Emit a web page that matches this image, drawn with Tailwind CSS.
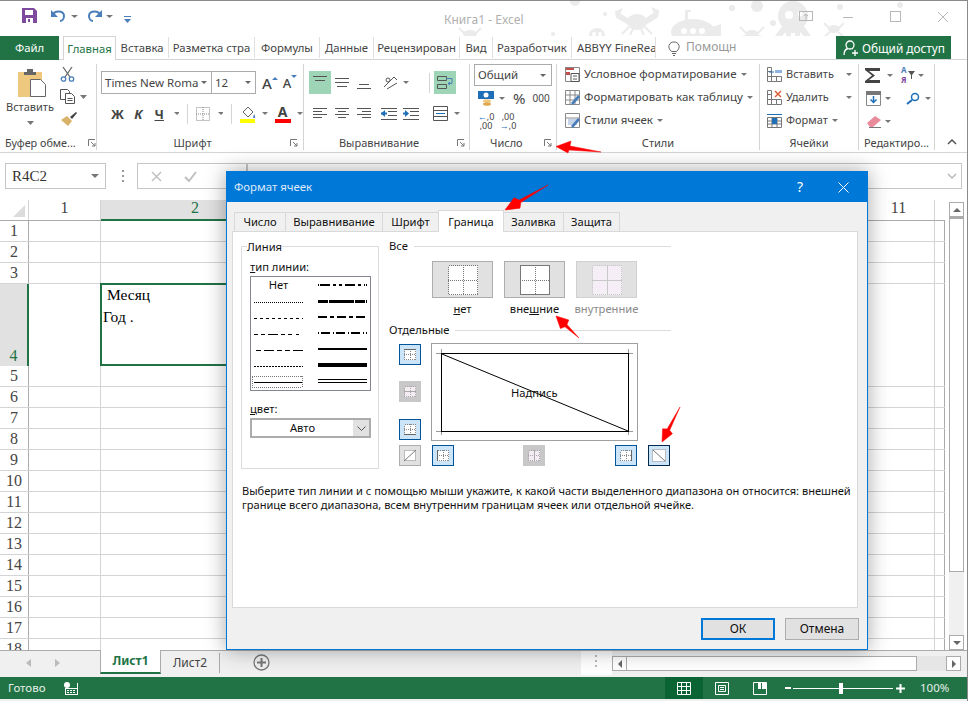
<!DOCTYPE html>
<html lang="ru">
<head>
  <meta charset="UTF-8" />
  <title>Книга1 - Excel</title>
  <script src="https://cdn.jsdelivr.net/npm/@tailwindcss/browser@4"></script>
</head>
<body class="bg-[#f0f0f0] text-[#444] font-['Noto_Sans',sans-serif] text-[11.500px] leading-[16px]">
<div class="relative w-[968px] h-[701px] overflow-hidden">

  <!-- Title bar -->
  <div class="relative h-[36px] bg-white border-t border-[#8a8a8a]">
    <svg class="absolute left-0 top-0" width="968" height="36" fill="#ebebeb">
      <!-- octopus -->
      <circle cx="793" cy="15" r="15"/><path d="M783 24h20l8 11h-7l-4-4v5h-5v-4h-4v4h-5v-5l-4 4h-7z"/><circle cx="789" cy="14" r="4" fill="#fff"/><circle cx="800" cy="13" r="2.500" fill="#fff"/>
      <!-- submarine -->
      <ellipse cx="693" cy="31" rx="22" ry="13"/><path d="M685 20V9h6v2h-3v9zM712 26l9-3v14l-9-3z"/><circle cx="684" cy="30" r="3" fill="#fff"/><circle cx="693" cy="30" r="3" fill="#fff"/><circle cx="702" cy="30" r="3" fill="#fff"/>
      <!-- skull -->
      <circle cx="597" cy="35" r="8"/><circle cx="594" cy="33" r="2" fill="#fff"/><circle cx="600" cy="33" r="2" fill="#fff"/>
      <!-- crabs -->
      <ellipse cx="637" cy="21" rx="10" ry="8"/><path d="M628 18l-9-5 2-4-5 2 1 5 10 6zM646 18l9-6-2-4 5 2-1 6-10 6zM629 26l-7 7M645 26l7 7M633 28l-3 6M641 28l3 6" stroke="#ebebeb" stroke-width="2"/>
      <ellipse cx="752" cy="33" rx="7" ry="4"/><path d="M746 32l-6-6M758 32l6-6M746 35l-5 1M758 35l5 1" stroke="#ebebeb" stroke-width="2"/>
      <ellipse cx="470" cy="33" rx="7" ry="4"/><path d="M464 32l-5-5M476 32l5-5" stroke="#ebebeb" stroke-width="2"/>
      <ellipse cx="834" cy="28" rx="6" ry="4"/><path d="M829 27l-5-5M839 27l5-5M830 31l-5 4M838 31l5 4" stroke="#ebebeb" stroke-width="2"/>
      <!-- bubbles -->
      <circle cx="605" cy="13" r="2"/><circle cx="553" cy="33" r="2"/><circle cx="732" cy="7" r="3"/><circle cx="773" cy="22" r="3"/><circle cx="757" cy="5" r="6"/><circle cx="575" cy="0" r="5"/><circle cx="900" cy="4" r="3"/><circle cx="840" cy="6" r="3"/>
    </svg>
    <svg class="absolute left-[22px] top-[7px]" width="15" height="15"><path d="M0 0h12l3 3v12H0z" fill="#7e4a9e"/><rect x="3" y="2" width="8" height="5" fill="#fff"/><rect x="4" y="10" width="7" height="5" fill="#fff"/><rect x="6" y="11" width="2" height="3" fill="#7e4a9e"/></svg>
    <svg class="absolute left-[50px] top-[8px]" width="28" height="14" fill="none"><path d="M2 7 C4 1 14 1 14 7 C14 10 12 12 10 12" stroke="#4a7ebb" stroke-width="2"/><path d="M1 1v7h7z" fill="#4a7ebb"/><path d="M21 6h7l-3.500 3z" fill="#777"/></svg>
    <svg class="absolute left-[85px] top-[8px]" width="28" height="14" fill="none"><path d="M16 7 C14 1 4 1 4 7 C4 10 6 12 8 12" stroke="#4a7ebb" stroke-width="2"/><path d="M17 1v7h-7z" fill="#4a7ebb"/><path d="M21 6h7l-3.500 3z" fill="#777"/></svg>
    <svg class="absolute left-[124px] top-[15px]" width="7" height="7"><path d="M0 0h7v1H0zM0 3h7L3.500 7z" fill="#4a7ebb"/></svg>
    <div class="absolute left-[444px] top-[11px] text-[#b0b0b0] text-[12px]">Книга1 - Excel</div>
    <svg class="absolute left-[799px] top-[10px]" width="154" height="12" fill="none" stroke="#b8b8b8"><rect x=".5" y=".5" width="13" height="9"/><path d="M7 9V4M5 5l2-2 2 2"/><path d="M44 6.500h10"/><rect x="91.500" y=".5" width="10" height="10"/><path d="M139 1l10 10M149 1l-10 10"/></svg>
  </div>

  <!-- Ribbon tabs -->
  <div class="relative flex h-[24px] bg-white border-b border-[#d4d4d4] text-[11.300px]">
    <div class="w-[59px] h-[24px] bg-[#217346] text-white flex items-center justify-center">Файл</div>
    <div class="ml-[4px] w-[53px] h-[24px] bg-white border border-b-0 border-[#d4d4d4] text-[#217346] flex items-center justify-center">Главная</div>
    <div class="w-[53px] my-[1px] border-r border-[#e0e0e0] flex items-center justify-center">Вставка</div>
    <div class="w-[86px] my-[1px] border-r border-[#e0e0e0] flex items-center justify-center overflow-hidden whitespace-nowrap">Разметка стра</div>
    <div class="w-[65px] my-[1px] border-r border-[#e0e0e0] flex items-center justify-center">Формулы</div>
    <div class="w-[54px] my-[1px] border-r border-[#e0e0e0] flex items-center justify-center">Данные</div>
    <div class="w-[86px] my-[1px] border-r border-[#e0e0e0] flex items-center justify-center overflow-hidden whitespace-nowrap">Рецензирован</div>
    <div class="w-[33px] my-[1px] border-r border-[#e0e0e0] flex items-center justify-center">Вид</div>
    <div class="w-[79px] my-[1px] border-r border-[#e0e0e0] flex items-center justify-center">Разработчик</div>
    <div class="w-[84px] my-[1px] border-r border-[#e0e0e0] flex items-center pl-[5px] overflow-hidden whitespace-nowrap">ABBYY FineRea</div>
    <svg class="ml-[12px] mt-[5px]" width="12" height="16" fill="none" stroke="#666"><path d="M3.500 10.500C1 8 .5 6 1 4.500 2 1.500 4 1 6 1s4 .5 5 3.500C11.500 6 11 8 8.500 10.500zM4 12.500h4M5 14.500h2"/></svg>
    <div class="ml-[6px] pt-[3px] text-[#999] text-[12px]">Помощн</div>
    <div class="absolute left-[836px] top-0 w-[115px] h-[23px] bg-[#217346] text-white flex items-center gap-[4px] pl-[7px]">
      <svg width="15" height="16" fill="none" stroke="#fff" stroke-width="1.300"><circle cx="7" cy="5" r="4"/><path d="M1 15c0-4 2-6 4-6.500M9 8.500l1 .5M12 10v6M9 13h6"/></svg>
      <span class="text-[11.800px]">Общий доступ</span>
    </div>
  </div>

  <!-- Ribbon -->
  <div class="flex h-[93px] pt-[4px] bg-white border-b border-[#d4d4d4]">
    <!-- Clipboard -->
    <div class="w-[97px] h-[86px] flex flex-col border-r border-[#d4d4d4]">
      <div class="h-[72px] flex">
        <div class="w-[60px] flex flex-col items-center">
          <svg class="mt-[4px] ml-[4px]" width="29" height="29"><rect x="0" y="4" width="24" height="25" fill="#edc87e"/><path d="M6 4h12v3H6zM9 1h6v3H9z" fill="#666"/><path d="M12.500 11.500h10l5 5v12h-15z" fill="#fff" stroke="#666"/></svg>
          <div class="mt-[2px] text-[11px]">Вставить</div>
          <svg class="mt-[6px]" width="7" height="4"><path d="M0 0h7L3.500 4z" fill="#777"/></svg>
        </div>
        <div class="flex flex-col gap-[7px] pt-[2px]">
          <svg width="15" height="16" fill="none" stroke="#666" stroke-width="1.300"><path d="M3 1l7 10M12 1L5 11"/><circle cx="3.500" cy="13" r="2.200" stroke="#4a7ebb"/><circle cx="11.500" cy="13" r="2.200" stroke="#4a7ebb"/></svg>
          <div class="flex items-center gap-[5px]">
            <svg width="15" height="15" fill="#fff" stroke="#555"><path d="M.5.500h7l2 2v8h-9z"/><path d="M5.500 4.500h6l3 3v7h-9z"/><path d="M7.500 9.500h5M7.500 11.500h5" /></svg>
            <svg width="7" height="4"><path d="M0 0h7L3.500 4z" fill="#777"/></svg>
          </div>
          <svg width="17" height="15"><path d="M10 6l6-5 1 1-5 6z" fill="#444"/><path d="M1 9l6-4 5 5-4 5z" fill="#d9b26a"/></svg>
        </div>
      </div>
      <div class="h-[14px] flex items-center pl-[5px] gap-[11px] leading-[14px] text-[10.800px]"><span class="whitespace-nowrap w-[72px]">Буфер обме...</span>
        <svg width="8" height="8" fill="none" stroke="#777"><path d="M.5 7V.5H7M3 3l4 4M7 4v3H4"/></svg></div>
    </div>
    <!-- Font -->
    <div class="w-[207px] h-[86px] flex flex-col border-r border-[#d4d4d4]">
      <div class="h-[72px] pl-[4px] pt-[7px]">
        <div class="flex items-center h-[23px]">
          <div class="w-[111px] h-[23px] border border-[#ababab] flex items-center pl-[3px] justify-between pr-[4px] whitespace-nowrap overflow-hidden"><span>Times New Roma</span><svg width="6" height="3"><path d="M0 0h6L3 3z" fill="#666"/></svg></div>
          <div class="w-[44px] h-[23px] border border-l-0 border-[#ababab] flex items-center pl-[3px] justify-between pr-[4px]"><span>12</span><svg width="6" height="3"><path d="M0 0h6L3 3z" fill="#666"/></svg></div>
          <span class="ml-[6px] text-[15px] font-medium relative">A<svg class="absolute left-[10px] top-[2px]" width="6" height="4"><path d="M3 0l3 3H0z" fill="#4a7ebb"/></svg></span>
          <span class="ml-[11px] text-[13px] font-medium relative">A<svg class="absolute left-[8px] top-[0px]" width="6" height="4"><path d="M0 0h6L3 3z" fill="#4a7ebb"/></svg></span>
        </div>
        <div class="flex items-center h-[21px] mt-[9px] pl-[5px]">
          <span class="w-[24px] text-center font-bold text-[13px]">Ж</span>
          <span class="w-[20px] text-center font-bold italic text-[13px]">К</span>
          <span class="w-[24px] text-center font-bold text-[13px] underline">Ч</span>
          <svg class="ml-[3px]" width="6" height="3"><path d="M0 0h6L3 3z" fill="#777"/></svg>
          <div class="ml-[8px] w-px h-[20px] bg-[#d4d4d4]"></div>
          <svg class="ml-[8px]" width="14" height="14" fill="none" stroke="#888" stroke-dasharray="1 1"><path d="M.5.500h13v13H.5zM7 0v14M0 7h14"/></svg>
          <svg class="ml-[8px]" width="6" height="3"><path d="M0 0h6L3 3z" fill="#777"/></svg>
          <div class="ml-[8px] w-px h-[20px] bg-[#d4d4d4]"></div>
          <svg class="ml-[8px]" width="16" height="18"><path d="M3 7l5-5 5 5-5 5z" fill="#fff" stroke="#666"/><path d="M14 9l2 4h-3z" fill="#4a7ebb"/><rect y="14" width="16" height="4" fill="#ffff00"/></svg>
          <svg class="ml-[7px]" width="6" height="3"><path d="M0 0h6L3 3z" fill="#777"/></svg>
          <div class="ml-[7px] relative w-[16px] h-[19px] text-center font-bold text-[14px] leading-[15px]">A<div class="absolute left-0 bottom-0 w-[16px] h-[4px] bg-[#ff0000]"></div></div>
          <svg class="ml-[7px]" width="6" height="3"><path d="M0 0h6L3 3z" fill="#777"/></svg>
        </div>
      </div>
      <div class="h-[14px] relative text-center leading-[14px] pr-[15px] text-[11px]">Шрифт
        <svg class="absolute right-[5px] top-[3px]" width="8" height="8" fill="none" stroke="#777"><path d="M.5 7V.5H7M3 3l4 4M7 4v3H4"/></svg></div>
    </div>
    <!-- Alignment -->
    <div class="w-[166px] h-[86px] flex flex-col border-r border-[#d4d4d4]">
      <div class="h-[72px] pl-[5px] pt-[7px]">
        <div class="flex items-center h-[23px]">
          <div class="w-[22px] h-[23px] bg-[#9fd5b7] flex justify-center pt-[5px]"><svg width="14" height="6" stroke="#555"><path d="M0 .5h14M2 4.500h10"/></svg></div>
          <svg class="ml-[4px]" width="14" height="9" stroke="#555"><path d="M0 .5h14M0 4.500h14M2 8.500h10"/></svg>
          <svg class="ml-[8px] mt-[9px]" width="14" height="6" stroke="#555"><path d="M2 .5h10M0 4.500h14"/></svg>
          <svg class="ml-[11px]" width="16" height="15" fill="none" stroke="#555"><path d="M2 12L12 2M5 14l10-6M12 2l3 3"/><circle cx="6" cy="5" r="2"/></svg>
          <svg class="ml-[5px]" width="6" height="3"><path d="M0 0h6L3 3z" fill="#777"/></svg>
          <div class="ml-[20px] w-px h-[20px] bg-[#d4d4d4]"></div>
          <div class="ml-[4px] w-[22px] h-[23px] bg-[#9fd5b7] flex justify-center items-center"><svg width="16" height="15" fill="none" stroke="#555"><path d="M.5 1.500h9v4h-9zM.5 9.500h9v4h-9z"/><path d="M9 3.500h6v5h-4M13 7l-2 1.500 2 1.500" stroke="#4a7ebb"/></svg></div>
        </div>
        <div class="flex items-center h-[21px] mt-[9px] pl-[4px] text-[#555]">
          <svg width="14" height="11" stroke="#555"><path d="M0 .5h14M0 3.500h9M0 6.500h14M0 9.500h9"/></svg>
          <svg class="ml-[8px]" width="14" height="11" stroke="#555"><path d="M0 .5h14M3 3.500h8M0 6.500h14M3 9.500h8"/></svg>
          <svg class="ml-[8px]" width="14" height="11" stroke="#555"><path d="M0 .5h14M5 3.500h9M0 6.500h14M5 9.500h9"/></svg>
          <svg class="ml-[10px]" width="16" height="12" stroke="#555"><path d="M0 .5h16M7 3.500h9M7 7.500h9M0 11.500h16"/><path d="M0 5.500h6" stroke="#1e6fb8" stroke-width="2"/><path d="M4 2l-4 3.500L4 9z" fill="#1e6fb8" stroke="none"/></svg>
          <svg class="ml-[6px]" width="16" height="12" stroke="#555"><path d="M0 .5h16M7 3.500h9M7 7.500h9M0 11.500h16"/><path d="M0 5.500h3" stroke="#1e6fb8" stroke-width="2"/><path d="M2 2l4 3.500L2 9z" fill="#1e6fb8" stroke="none"/></svg>
          <svg class="ml-[14px]" width="15" height="15" fill="none" stroke="#555"><path d="M.5.500h14v14H.5zM0 4.500h15M0 10.500h15"/><path d="M3 7.500h9" stroke="#1e6fb8"/></svg>
          <svg class="ml-[6px]" width="6" height="3"><path d="M0 0h6L3 3z" fill="#777"/></svg>
        </div>
      </div>
      <div class="h-[14px] relative text-center leading-[14px] pr-[15px] text-[11px]">Выравнивание
        <svg class="absolute right-[4px] top-[3px]" width="8" height="8" fill="none" stroke="#777"><path d="M.5 7V.5H7M3 3l4 4M7 4v3H4"/></svg></div>
    </div>
    <!-- Number -->
    <div class="w-[87px] h-[86px] flex flex-col border-r border-[#d4d4d4]">
      <div class="h-[72px] pl-[4px]">
        <div class="w-[78px] h-[22px] border border-[#ababab] flex items-center justify-between pl-[3px] pr-[5px]"><span>Общий</span><svg width="6" height="3"><path d="M0 0h6L3 3z" fill="#666"/></svg></div>
        <div class="flex items-center h-[20px] mt-[2px] pl-[4px]">
          <svg width="17" height="15"><rect x="0" y="0" width="16" height="8" fill="#1e6fb8"/><circle cx="8" cy="4" r="2.500" fill="#fff"/><ellipse cx="9" cy="10" rx="4" ry="1.800" fill="#edc87e"/><ellipse cx="9" cy="13" rx="4" ry="1.800" fill="#e0a94f"/></svg>
          <svg class="ml-[4px]" width="6" height="3"><path d="M0 0h6L3 3z" fill="#777"/></svg>
          <span class="ml-[8px] text-[15px]">%</span>
          <span class="ml-[7px] text-[10px]">000</span>
        </div>
        <div class="flex items-center h-[20px] mt-[3px] pl-[3px] text-[9px] leading-[9px]">
          <span class="w-[18px] text-center whitespace-nowrap"><span class="text-[#1e6fb8]">←</span>,0<br />,00</span>
          <span class="ml-[4px] w-[18px] text-center whitespace-nowrap">,00<br /><span class="text-[#1e6fb8]">→</span>,0</span>
        </div>
      </div>
      <div class="h-[14px] relative leading-[14px] pl-[20px] text-[11px]">Число
        <svg class="absolute right-[4px] top-[3px]" width="8" height="8" fill="none" stroke="#777"><path d="M.5 7V.5H7M3 3l4 4M7 4v3H4"/></svg></div>
    </div>
    <!-- Styles -->
    <div class="w-[203px] h-[86px] flex flex-col border-r border-[#d4d4d4]">
      <div class="h-[72px] pl-[8px] pt-[2px] flex flex-col gap-[7px]">
        <div class="flex items-center h-[16px] gap-[4px] whitespace-nowrap">
          <svg width="15" height="15" fill="none"><path d="M0 0h9v3H0zM0 5h5v3H0z" fill="#c0504d"/><path d="M.5.500h14v14H.5z" stroke="#888"/><path d="M6 6.500h8v8H6z" fill="#fff" stroke="#555"/><path d="M8 9h4M8 12h4" stroke="#555"/></svg>
          <span>Условное форматирование</span><svg width="6" height="3"><path d="M0 0h6L3 3z" fill="#777"/></svg></div>
        <div class="flex items-center h-[16px] gap-[4px] whitespace-nowrap">
          <svg width="15" height="15" fill="none" stroke="#888"><path d="M.5.500h14v14H.5zM0 5h15M0 10h15M5 0v15M10 0v15"/><path d="M6 13l7-8 2 2-7 8z" fill="#4a7ebb" stroke="none"/></svg>
          <span>Форматировать как таблицу</span><svg width="6" height="3"><path d="M0 0h6L3 3z" fill="#777"/></svg></div>
        <div class="flex items-center h-[16px] gap-[4px] whitespace-nowrap">
          <svg width="15" height="15" fill="none" stroke="#888"><path d="M.5.500h14v14H.5zM0 5h15"/><path d="M3 6h9v6H3z" fill="#c5d3e8" stroke="none"/><path d="M6 13l7-8 2 2-7 8z" fill="#4a7ebb" stroke="none"/></svg>
          <span>Стили ячеек</span><svg width="6" height="3"><path d="M0 0h6L3 3z" fill="#777"/></svg></div>
      </div>
      <div class="h-[14px] text-center leading-[14px] text-[11px]">Стили</div>
    </div>
    <!-- Cells -->
    <div class="w-[99px] h-[86px] flex flex-col border-r border-[#d4d4d4] text-[11px]">
      <div class="h-[72px] pl-[7px] pt-[2px] flex flex-col gap-[7px]">
        <div class="flex items-center h-[16px] gap-[4px] whitespace-nowrap">
          <svg width="15" height="15" fill="none" stroke="#777"><path d="M.5.500h4v4h-4zM.5 4.500h4v5h-4zM.5 9.500h4v5h-4zM4.500 9.500h5v5h-5zM9.500 9.500h5v5h-5z"/><path d="M8 3h7v3H8z" fill="#8db4e2" stroke="none"/><path d="M2 5h5" stroke="#1e6fb8"/></svg>
          <span class="w-[56px]">Вставить</span><svg width="6" height="3"><path d="M0 0h6L3 3z" fill="#777"/></svg></div>
        <div class="flex items-center h-[16px] gap-[4px] whitespace-nowrap">
          <svg width="15" height="15" fill="none" stroke="#777"><path d="M.5.500h4v4h-4zM.5 4.500h4v5h-4zM.5 9.500h4v5h-4zM4.500 9.500h5v5h-5zM9.500 9.500h5v5h-5z"/><path d="M8 1l6 6M14 1L8 7" stroke="#d9603b" stroke-width="1.500"/></svg>
          <span class="w-[56px]">Удалить</span><svg width="6" height="3"><path d="M0 0h6L3 3z" fill="#777"/></svg></div>
        <div class="flex items-center h-[16px] gap-[4px] whitespace-nowrap">
          <svg width="15" height="15" fill="none" stroke="#777"><path d="M.5 4.500h14v10H.5zM0 8h15M0 11h15M5 4v11M10 4v11"/><path d="M5 5h5v6H5z" fill="#1e6fb8" stroke="none"/><path d="M0 1.500h15" stroke="#1e6fb8"/></svg>
          <span>Формат</span><svg width="6" height="3"><path d="M0 0h6L3 3z" fill="#777"/></svg></div>
      </div>
      <div class="h-[14px] text-center leading-[14px]">Ячейки</div>
    </div>
    <!-- Editing -->
    <div class="w-[76px] h-[86px] flex flex-col border-r border-[#d4d4d4]">
      <div class="h-[72px] pl-[6px] pt-[2px] flex flex-col gap-[5px]">
        <div class="flex items-center h-[18px]">
          <svg width="16" height="15"><path d="M0 0h15v3H4l6 4.500L4 12h11v3H0v-2l7-5.500L0 2z" fill="#444"/></svg>
          <svg class="ml-[6px]" width="6" height="3"><path d="M0 0h6L3 3z" fill="#777"/></svg>
          <div class="ml-[8px] flex flex-col text-[8px] leading-[10px] font-bold"><span class="text-[#4a7ebb]">А</span><span class="text-[#7e4a9e]">Я</span></div>
          <svg class="ml-[1px]" width="7" height="8"><path d="M0 0h7L4 4v4H3V4z" fill="#555"/></svg>
          <svg class="ml-[3px]" width="6" height="3"><path d="M0 0h6L3 3z" fill="#777"/></svg>
        </div>
        <div class="flex items-center h-[18px]">
          <svg class="ml-[1px]" width="15" height="15" fill="none"><path d="M.5.500h14v14H.5z" stroke="#888"/><path d="M0 0h15v4H0z" fill="#777"/><path d="M7.500 5v6M4.500 8.500l3 3 3-3" stroke="#1e6fb8" stroke-width="1.500"/></svg>
          <svg class="ml-[4px]" width="6" height="3"><path d="M0 0h6L3 3z" fill="#777"/></svg>
          <svg class="ml-[15px]" width="14" height="13" fill="none" stroke="#1e6fb8" stroke-width="1.500"><circle cx="9" cy="5" r="3.500"/><path d="M6 8l-5 4" stroke-width="2"/></svg>
          <svg class="ml-[5px]" width="6" height="3"><path d="M0 0h6L3 3z" fill="#777"/></svg>
        </div>
        <div class="flex items-center h-[18px]">
          <svg class="ml-[2px]" width="15" height="13"><path d="M0 8l8-7 6 4-8 7H3z" fill="#e98b9a"/><path d="M2 12.500h12" stroke="#777"/></svg>
          <svg class="ml-[3px]" width="6" height="3"><path d="M0 0h6L3 3z" fill="#777"/></svg>
        </div>
      </div>
      <div class="h-[14px] text-center leading-[14px] whitespace-nowrap text-[11px]">Редактиро...</div>
    </div>
    <div class="flex-1 h-[86px] flex items-end justify-center pb-[5px]">
      <svg width="10" height="6" fill="none" stroke="#555" stroke-width="1.500"><path d="M1 5l4-4 4 4"/></svg>
    </div>
  </div>

  <!-- Formula bar -->
  <div class="flex h-[47px] bg-white pt-[10px] pl-[5px]">
    <div class="w-[101px] h-[26px] border border-[#c6c6c6] flex items-center justify-between pl-[6px] pr-[6px] font-['Liberation_Serif',serif] text-[15px] text-[#333]"><span>R4C2</span><svg width="8" height="4"><path d="M0 0h8L4 4z" fill="#777"/></svg></div>
    <svg class="ml-[16px] mt-[7px]" width="3" height="12" fill="#999"><rect width="2" height="2"/><rect y="5" width="2" height="2"/><rect y="10" width="2" height="2"/></svg>
    <div class="ml-[12px] w-[110px] h-[26px] border border-[#c6c6c6] bg-white flex items-center pl-[13px] gap-[22px]">
      <svg width="11" height="11" stroke="#c0c0c0" stroke-width="1.500"><path d="M1 1l9 9M10 1l-9 9"/></svg>
      <svg width="13" height="11" fill="none" stroke="#c0c0c0" stroke-width="2"><path d="M1 6l4 4 7-9"/></svg>
    </div>
    <div class="w-[715px] h-[26px] border border-[#c6c6c6] flex items-center justify-end pr-[4px]">
      <svg width="10" height="6" fill="none" stroke="#bbb" stroke-width="1.500"><path d="M1 1l4 4 4-4"/></svg>
    </div>
  </div>

  <!-- Sheet grid with scrollbar -->
  <div class="flex h-[450px] bg-white">
    <div class="w-[945px] h-[450px] overflow-hidden font-['Liberation_Serif',serif] text-[16px] text-[#444]">
      <div class="flex h-[21px] border-b border-[#ababab]">
        <div class="w-[29px] border-r border-[#d4d4d4] relative"><svg class="absolute left-[13px] top-[5px]" width="12" height="12"><path d="M12 0v12H0z" fill="#dcdcdc"/></svg></div>
        <div class="w-[72px] border-r border-[#d4d4d4] text-center">1</div>
        <div class="w-[188px] bg-[#e1e1e1] text-center text-[#217346] relative -mb-px border-b-2 border-[#217346]">2</div>
        <div class="w-[574px]"></div>
        <div class="w-[72px] border-r border-[#d4d4d4] text-center">11</div>
        <div class="w-[10px]"></div>
      </div>
      <div id="rows"></div>
    </div>
    <div class="ml-[4px] w-[15px] h-[450px] flex flex-col pt-[2px]">
      <div class="h-[15px] border border-[#ababab] bg-white flex items-center justify-center"><svg width="8" height="4"><path d="M4 0l4 4H0z" fill="#666"/></svg></div>
      <div class="h-[355px] border border-t-2 border-[#ababab] bg-white"></div>
      <div class="flex-1 bg-[#f0f0f0]"></div>
      <div class="h-[15px] border border-[#ababab] bg-white flex items-center justify-center"><svg width="8" height="4"><path d="M0 0h8L4 4z" fill="#666"/></svg></div>
    </div>
  </div>

  <!-- Sheet tabs -->
  <div class="flex h-[27px] bg-[#f0f0f0] border-t border-[#ababab]">
    <div class="w-[100px] flex items-start pl-[26px] gap-[24px] pt-[8px]">
      <svg width="5" height="8"><path d="M5 0v8L0 4z" fill="#bbb"/></svg>
      <svg width="5" height="8"><path d="M0 0v8l5-4z" fill="#bbb"/></svg>
    </div>
    <div class="w-[61px] h-[24px] -mt-px bg-white border-x border-[#ababab] border-b-2 border-b-[#217346] text-[#217346] font-bold flex items-center justify-center text-[12px]">Лист1</div>
    <div class="w-[59px] h-[20px] mt-[2px] border-r border-[#ababab] flex items-center justify-center text-[12px]">Лист2</div>
    <svg class="ml-[33px] mt-[3px]" width="17" height="17" fill="none" stroke="#777" stroke-width="1.300"><circle cx="8.500" cy="8.500" r="7.500"/><path d="M8.500 4v9M4 8.500h9" stroke-width="2"/></svg>
    <div class="ml-[311px] w-[31px] h-[24px] bg-white flex justify-center pt-[4px]"><svg width="3" height="12" fill="#bbb"><rect width="2" height="2"/><rect y="5" width="2" height="2"/><rect y="10" width="2" height="2"/></svg></div>
    <div class="mt-[5px] w-[349px] h-[15px] flex">
      <div class="w-[15px] border border-[#ababab] bg-white flex items-center justify-center"><svg width="4" height="8"><path d="M4 0v8L0 4z" fill="#666"/></svg></div>
      <div class="w-[290px] border border-l-0 border-[#ababab] bg-white"></div>
      <div class="w-[29px] bg-[#e6e6e6]"></div>
      <div class="w-[15px] border border-[#ababab] bg-white flex items-center justify-center"><svg width="4" height="8"><path d="M0 0v8l4-4z" fill="#666"/></svg></div>
    </div>
  </div>

  <!-- Status bar -->
  <div class="flex items-center h-[22px] bg-[#217346] text-[#e4efe8]">
    <span class="ml-[8px] w-[37px]">Готово</span>
    <svg class="ml-[19px]" width="14" height="13" fill="#fff"><circle cx="3" cy="3" r="3"/><path d="M5 1h9v12H1V6h13v1H2v5h11V1z"/><path d="M3 8h2v1H3zM6 8h2v1H6zM9 8h2v1H9zM3 10h2v1H3zM6 10h2v1H6zM9 10h2v1H9z"/></svg>
    <div class="ml-[587px] w-[38px] h-[22px] bg-[#0a6332] flex items-center justify-center">
      <svg width="14" height="13" fill="none" stroke="#fff"><path d="M.5.500h13v12H.5zM0 4.500h14M0 8.500h14M4.500 0v13M9.500 0v13"/></svg>
    </div>
    <svg class="ml-[12px]" width="14" height="13" fill="none" stroke="#fff"><path d="M.5.500h13v12H.5zM3.500 3.500h7v6h-7zM5 5.500h4M5 7.500h4"/></svg>
    <svg class="ml-[24px]" width="14" height="13" fill="none" stroke="#fff"><path d="M.5.500h13v12H.5z"/><path d="M5 0h3v7H5zM9 0h4v7H9z" fill="#fff" stroke="none" /></svg>
    <svg class="ml-[18px]" width="6" height="3"><rect y="0" width="6" height="2" fill="#fff"/></svg>
    <div class="ml-[2px] w-[100px] h-px bg-white relative"><div class="absolute left-[46px] -top-[5px] w-[4px] h-[11px] bg-white"></div></div>
    <svg class="ml-[3px]" width="9" height="9" fill="#fff"><path d="M0 3.500h9v2H0zM3.500 0h2v9h-2z"/></svg>
    <span class="ml-[15px]">100%</span>
  </div>

  <!-- Format cells dialog -->
  <div class="absolute left-[226px] top-[171px] w-[642px] h-[479px] bg-[#f0f0f0] border border-[#0078d7] shadow-[0_0_20px_rgba(0,0,0,0.35)] text-[#111] text-[11.200px]">
    <div class="flex items-center h-[30px] bg-[#0078d7] text-[#dceafa] pl-[7px] text-[11.400px]">
      <span>Формат ячеек</span>
      <span class="ml-auto text-[14px] text-white">?</span>
      <svg class="ml-[35px] mr-[18px]" width="11" height="11" stroke="#fff"><path d="M.5.500l10 10M10.500.500l-10 10"/></svg>
    </div>
    <div class="flex items-end h-[29px] pl-[7px]">
      <div class="w-[52px] h-[19px] border border-b-0 border-[#d9d9d9] flex items-center justify-center">Число</div>
      <div class="w-[97px] h-[19px] border-y border-r border-b-0 border-[#d9d9d9] flex items-center justify-center">Выравнивание</div>
      <div class="w-[55px] h-[19px] border-t border-[#d9d9d9] flex items-center justify-center">Шрифт</div>
      <div class="relative w-[66px] h-[22px] -mb-px bg-white border border-b-0 border-[#d9d9d9] flex items-center justify-center z-10">Граница</div>
      <div class="w-[60px] h-[19px] border-t border-r border-[#d9d9d9] flex items-center justify-center">Заливка</div>
      <div class="w-[56px] h-[19px] border-t border-r border-[#d9d9d9] flex items-center justify-center">Защита</div>
    </div>
    <div class="ml-[5px] w-[626px] h-[377px] bg-white border border-[#d9d9d9] pt-[7px]">
      <div class="flex">
        <!-- Line group -->
        <div class="relative ml-[8px] mt-[7px] w-[138px] h-[223px] border border-[#dcdcdc] px-[8px] pt-[12px]">
          <span class="absolute left-[5px] -top-[8px] bg-white">Линия</span>
          <div class="h-[16px] leading-[16px]"><u>т</u>ип линии:</div>
          <div class="mt-px w-[121px] h-[115px] border border-[#828790] flex pl-[3px]">
            <div class="w-[49px]">
              <div class="h-[16px] text-center leading-[16px]">Нет</div>
              <svg width="50" height="98" shape-rendering="crispEdges" stroke="#000" class="overflow-visible">
                <path d="M0 9.500h49" stroke-dasharray="1 1"/>
                <path d="M0 25.500h49" stroke-dasharray="3 3"/>
                <path d="M0 41.500h49" stroke-dasharray="4 3 4 3 10 3 4 3 4"/>
                <path d="M2 57.500h47" stroke-dasharray="5 3 10 3 5 3"/>
                <path d="M0 73.500h49" stroke-dasharray="2 1"/>
                <path d="M0 89.500h49" stroke-width="1"/>
                <rect x="-1.500" y="83.500" width="50" height="11" rx="1" fill="none" stroke="#777" stroke-dasharray="1 1"/>
              </svg>
            </div>
            <div class="ml-[15px] w-[49px]">
              <svg width="49" height="112" shape-rendering="crispEdges" stroke="#000" fill="none">
                <path d="M0 8h49" stroke-width="2" stroke-dasharray="1 1 10 3 3 3 3 3 10 3 3 3"/>
                <path d="M0 24h49" stroke-width="3" stroke-dasharray="10 1 25 1"/>
                <path d="M0 40h49" stroke-width="2" stroke-dasharray="9 3 4 3"/>
                <path d="M0 56h49" stroke-width="2" stroke-dasharray="1 2 9 3"/>
                <path d="M0 72h49" stroke-width="2"/>
                <path d="M0 88h49" stroke-width="4"/>
                <path d="M0 102.500h49M0 105.500h49"/>
              </svg>
            </div>
          </div>
          <div class="mt-[10px] h-[15px]"><u>ц</u>вет:</div>
          <div class="mt-[2px] w-[121px] h-[20px] border-2 border-[#acacac] flex items-center">
            <span class="flex-1 text-center">Авто</span>
            <div class="w-[16px] h-[16px] bg-[#e1e1e1] flex items-center justify-center"><svg width="9" height="5" fill="none" stroke="#555"><path d="M.5.500l4 4 4-4"/></svg></div>
          </div>
        </div>
        <!-- Borders -->
        <div class="ml-[10px] w-[282px]">
          <div class="flex items-center h-[14px] gap-[6px]"><span>Все</span><div class="flex-1 h-px bg-[#dcdcdc]"></div></div>
          <div class="flex mt-[8px] pl-[43px] gap-[11px]">
            <div class="w-[61px] flex flex-col items-center">
              <div class="w-[61px] h-[37px] bg-[#e1e1e1] border border-[#adadad] flex items-center justify-center">
                <svg width="30" height="30" fill="#fff" stroke="#777" stroke-dasharray="1 1" shape-rendering="crispEdges"><path d="M.5.500h29v29H.5zM15 0v30M0 15h30"/></svg>
              </div>
              <div class="mt-[4px] h-[14px] leading-[14px]"><u>н</u>ет</div>
            </div>
            <div class="w-[61px] flex flex-col items-center">
              <div class="w-[61px] h-[37px] bg-[#e1e1e1] border border-[#adadad] flex items-center justify-center">
                <svg width="30" height="30" fill="#fff" stroke="#777" shape-rendering="crispEdges"><path d="M.5.500h29v29H.5z"/><path d="M15 0v30M0 15h30" stroke-dasharray="1 1"/></svg>
              </div>
              <div class="mt-[4px] h-[14px] leading-[14px]">вне<u>ш</u>ние</div>
            </div>
            <div class="w-[61px] flex flex-col items-center">
              <div class="w-[61px] h-[37px] bg-[#e1e1e1] border border-[#d0d0d0] flex items-center justify-center">
                <svg width="30" height="30" fill="#f6eef6" stroke="#c8c8c8" shape-rendering="crispEdges"><path d="M.5.500h29v29H.5z" stroke-dasharray="1 1"/><path d="M15 0v30M0 15h30" /></svg>
              </div>
              <div class="mt-[4px] h-[14px] leading-[14px] text-[#8a8a8a] whitespace-nowrap">внутренние</div>
            </div>
          </div>
          <div class="flex items-center h-[14px] gap-[6px] mt-[7px]"><span>Отдельные</span><div class="flex-1 h-px bg-[#dcdcdc]"></div></div>
          <div class="flex mt-[6px]">
            <div class="ml-[10px] w-[22px] flex flex-col pt-px">
              <svg width="22" height="21" shape-rendering="crispEdges"><rect x=".5" y=".5" width="21" height="20" fill="#cce4f7" stroke="#005499"/><path d="M5.500 5.500h11v10h-11zM11 5v11M5 10.500h12" fill="#fff" stroke="#888" stroke-dasharray="1 1"/><path d="M5 5.500h12" stroke="#666"/></svg>
              <svg class="mt-[16px]" width="22" height="21" shape-rendering="crispEdges"><rect width="22" height="21" fill="#c8c8c8"/><path d="M5.500 5.500h11v10h-11zM11 5v11" fill="#f3ecf3" stroke="#aaa" stroke-dasharray="1 1"/><path d="M5 10.500h12" stroke="#aaa"/></svg>
              <svg class="mt-[17px]" width="22" height="21" shape-rendering="crispEdges"><rect x=".5" y=".5" width="21" height="20" fill="#cce4f7" stroke="#005499"/><path d="M5.500 5.500h11v10h-11zM11 5v11M5 10.500h12" fill="#fff" stroke="#888" stroke-dasharray="1 1"/><path d="M5 15.500h12" stroke="#666"/></svg>
              <svg class="mt-[5px]" width="22" height="21"><rect x=".5" y=".5" width="21" height="20" fill="#e1e1e1" stroke="#adadad"/><path d="M5.500 5.500h11v10h-11z" fill="#fff" stroke="#888" stroke-dasharray="1 1"/><path d="M5 16L17 5" stroke="#777"/></svg>
            </div>
            <div class="ml-[10px]">
              <div class="relative w-[207px] h-[98px] border border-[#a0a0a0]">
                <svg class="absolute left-0 top-0" width="205" height="96" fill="none" shape-rendering="crispEdges">
                  <path d="M9 5v4M196 5v4M9 87v4M196 87v4M4 9.500h5M196 9.500h5M4 87.500h5M196 87.500h5" stroke="#999"/>
                  <rect x="9.500" y="9.500" width="187" height="78" stroke="#000"/>
                  <path d="M10 10L196 87" stroke="#000" shape-rendering="auto"/>
                </svg>
                <span class="absolute left-[79px] top-[41px]">Надпись</span>
              </div>
              <div class="flex mt-[4px]">
                <svg class="ml-px" width="22" height="21" shape-rendering="crispEdges"><rect x=".5" y=".5" width="21" height="20" fill="#cce4f7" stroke="#005499"/><path d="M5.500 5.500h11v10h-11zM11 5v11M5 10.500h12" fill="#fff" stroke="#888" stroke-dasharray="1 1"/><path d="M5.500 5v11" stroke="#666"/></svg>
                <svg class="ml-[69px]" width="22" height="21" shape-rendering="crispEdges"><rect width="22" height="21" fill="#c8c8c8"/><path d="M5.500 5.500h11v10h-11zM5 10.500h12" fill="#f3ecf3" stroke="#aaa" stroke-dasharray="1 1"/><path d="M11 5v11" stroke="#aaa"/></svg>
                <svg class="ml-[70px]" width="22" height="21" shape-rendering="crispEdges"><rect x=".5" y=".5" width="21" height="20" fill="#cce4f7" stroke="#005499"/><path d="M5.500 5.500h11v10h-11zM11 5v11M5 10.500h12" fill="#fff" stroke="#888" stroke-dasharray="1 1"/><path d="M16.500 5v11" stroke="#666"/></svg>
                <svg class="ml-[11px]" width="22" height="21"><rect x=".5" y=".5" width="21" height="20" fill="#cce4f7" stroke="#005499"/><rect x=".5" y=".5" width="21" height="20" fill="none" stroke="#000" stroke-dasharray="1 1"/><path d="M4.500 4.500h13v12h-13z" fill="#fff" stroke="#888" stroke-dasharray="1 1"/><path d="M5 5l12 11" stroke="#777"/></svg>
              </div>
            </div>
          </div>
        </div>
      </div>
      <p class="ml-[9px] mt-[15px] whitespace-nowrap text-[11.050px] leading-[14px]">Выберите тип линии и с помощью мыши укажите, к какой части выделенного диапазона он относится: внешней<br />границе всего диапазона, всем внутренним границам ячеек или отдельной ячейке.</p>
    </div>
    <div class="flex justify-end gap-[10px] pr-[8px] mt-[10px] text-[12px]">
      <div class="w-[74px] h-[22px] bg-[#e1e1e1] border-2 border-[#0078d7] flex items-center justify-center">ОК</div>
      <div class="w-[74px] h-[22px] bg-[#e1e1e1] border border-[#adadad] flex items-center justify-center">Отмена</div>
    </div>
  </div>

  <!-- Red annotation arrows -->
  <svg class="absolute left-0 top-0 pointer-events-none" width="968" height="701" fill="#f00" stroke="#f00" stroke-width=".5">
    <path d="M601 152L570 146l1-5-15 5.500 12 6.500 1-3z"/>
    <path d="M548 185L520.800 202.600 520 208.200 505 210 514 197.800 519.200 200z"/>
    <path d="M579 338L567 324.600 568.800 320 556 316 560.400 328.600 565 326.800z"/>
    <path d="M680 407L669.700 430.300 672.400 433.800 662 442 662.600 428.800 667.100 428.900z"/>
  </svg>

  <!-- window edge on the right -->
  <div class="absolute right-0 top-0 w-px h-[701px] bg-[#8a8a8a]"></div>
</div>

<script>
  // grid rows: row 4 is the tall selected one
  let html = "";
  for (let n = 1; n <= 18; n++) {
    const sel = n === 4;
    html += `<div class="flex ${sel ? "h-[82px]" : "h-[21px]"} ${sel ? "" : "border-b border-[#d4d4d4]"}">
      <div class="w-[29px] ${sel ? "bg-[#e1e1e1] border-r-2 border-[#217346] text-[#217346] flex items-end justify-center" : "border-r border-[#ababab] text-center"} leading-[20px]">${n}</div>
      <div class="w-[72px] border-r border-[#d4d4d4]"></div>
      <div class="relative w-[188px] border-r border-[#d4d4d4]">${sel ? `<div class="absolute -left-px -top-px w-[189px] h-[83px] border-2 border-[#217346] text-[#000] text-[15.500px] leading-[22px] pl-[1px]"><div class="pl-[4px] -mt-px">Месяц</div><div>Год .</div></div>` : ""}</div>
      <div class="w-[574px]"></div>
      <div class="w-[72px] border-r border-[#d4d4d4]"></div>
      <div class="w-[10px] border-r border-[#ababab]"></div>
    </div>`;
  }
  document.getElementById("rows").innerHTML = html;
</script>
</body>
</html>
